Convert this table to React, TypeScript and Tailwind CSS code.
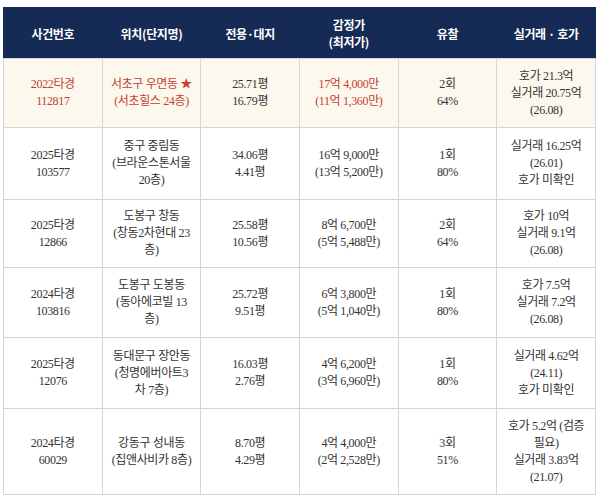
import React from "react";

type Row = {
  caseNo: string[];
  location: string[];
  area: string[];
  price: string[];
  fail: string[];
  trade: string[];
  height: string;
  highlight?: boolean;
};

const rows: Row[] = [
  {
    caseNo: ["2022타경", "112817"],
    location: ["서초구 우면동 ★", "(서초힐스 24층)"],
    area: ["25.71평", "16.79평"],
    price: ["17억 4,000만", "(11억 1,360만)"],
    fail: ["2회", "64%"],
    trade: ["호가 21.3억", "실거래 20.75억", "(26.08)"],
    height: "h-[69px]",
    highlight: true,
  },
  {
    caseNo: ["2025타경", "103577"],
    location: ["중구 중림동", "(브라운스톤서울", "20층)"],
    area: ["34.06평", "4.41평"],
    price: ["16억 9,000만", "(13억 5,200만)"],
    fail: ["1회", "80%"],
    trade: ["실거래 16.25억", "(26.01)", "호가 미확인"],
    height: "h-[72px]",
  },
  {
    caseNo: ["2025타경", "12866"],
    location: ["도봉구 창동", "(창동2차현대 23", "층)"],
    area: ["25.58평", "10.56평"],
    price: ["8억 6,700만", "(5억 5,488만)"],
    fail: ["2회", "64%"],
    trade: ["호가 10억", "실거래 9.1억", "(26.08)"],
    height: "h-[68px]",
  },
  {
    caseNo: ["2024타경", "103816"],
    location: ["도봉구 도봉동", "(동아에코빌 13", "층)"],
    area: ["25.72평", "9.51평"],
    price: ["6억 3,800만", "(5억 1,040만)"],
    fail: ["1회", "80%"],
    trade: ["호가 7.5억", "실거래 7.2억", "(26.08)"],
    height: "h-[70px]",
  },
  {
    caseNo: ["2025타경", "12076"],
    location: ["동대문구 장안동", "(청명에버아트3", "차 7층)"],
    area: ["16.03평", "2.76평"],
    price: ["4억 6,200만", "(3억 6,960만)"],
    fail: ["1회", "80%"],
    trade: ["실거래 4.62억", "(24.11)", "호가 미확인"],
    height: "h-[71px]",
  },
  {
    caseNo: ["2024타경", "60029"],
    location: ["강동구 성내동", "(집앤사비카 8층)"],
    area: ["8.70평", "4.29평"],
    price: ["4억 4,000만", "(2억 2,528만)"],
    fail: ["3회", "51%"],
    trade: ["호가 5.2억 (검증", "필요)", "실거래 3.83억", "(21.07)"],
    height: "h-[86px]",
  },
];

const headers = [["사건번호"], ["위치(단지명)"], ["전용·대지"], ["감정가", "(최저가)"], ["유찰"], ["실거래 · 호가"]];

const Lines = ({ lines }: { lines: string[] }) => (
  <>
    {lines.map((l, i) => (
      <div key={i} className="whitespace-nowrap">
        {l}
      </div>
    ))}
  </>
);

const cell = "border border-[#d3d5dc] text-center align-middle px-1";

export default function App() {
  return (
    <div
      className="w-[600px] h-[500px] bg-white pt-[7px] pl-[3px]"
      style={{ fontFamily: '"Liberation Serif", "Noto Sans CJK KR", serif' }}
    >
      <table className="table-fixed w-[593px] border-collapse text-[12px] leading-[17px] tracking-[-0.03em] text-[#333]">
        <thead>
          <tr className="h-[51px] bg-[#152a54] text-white font-bold">
            {headers.map((h, i) => (
              <th
                key={i}
                className="border border-[#152a54] border-b-[#d3d5dc] text-center align-middle font-bold text-[12px] leading-[17px]"
                style={{ fontFamily: '"Noto Sans CJK KR", "Noto Sans", sans-serif' }}
              >
                <Lines lines={h} />
              </th>
            ))}
          </tr>
        </thead>
        <tbody>
          {rows.map((r, i) => (
            <tr key={i} className={`${r.height} ${r.highlight ? "bg-[#fdf8ee]" : "bg-white"}`}>
              <td className={`${cell} ${r.highlight ? "text-[#c4402f]" : ""}`}>
                <Lines lines={r.caseNo} />
              </td>
              <td className={`${cell} ${r.highlight ? "text-[#c4402f]" : ""}`}>
                <Lines lines={r.location} />
              </td>
              <td className={cell}>
                <Lines lines={r.area} />
              </td>
              <td className={`${cell} ${r.highlight ? "text-[#c4402f]" : ""}`}>
                <Lines lines={r.price} />
              </td>
              <td className={cell}>
                <Lines lines={r.fail} />
              </td>
              <td className={cell}>
                <Lines lines={r.trade} />
              </td>
            </tr>
          ))}
        </tbody>
      </table>
    </div>
  );
}
